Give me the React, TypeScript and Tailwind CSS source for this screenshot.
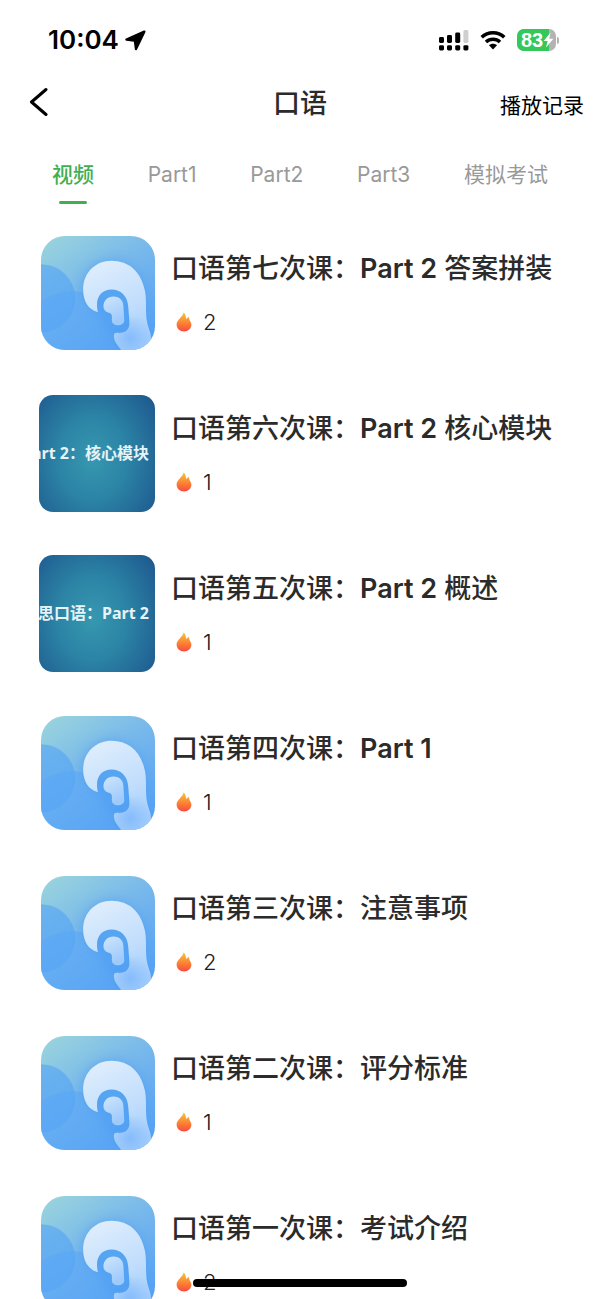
import { useState } from 'react';

type Cover = 'ear' | 'text';

type Lesson = {
    title: string;
    views: number;
    cover: Cover;
    coverText?: string;
};

const TABS = ['视频', 'Part1', 'Part2', 'Part3', '模拟考试'];

const LESSONS: Lesson[] = [
    { title: '口语第七次课：Part 2 答案拼装', views: 2, cover: 'ear' },
    { title: '口语第六次课：Part 2 核心模块', views: 1, cover: 'text', coverText: 'art 2：核心模块' },
    { title: '口语第五次课：Part 2 概述', views: 1, cover: 'text', coverText: '思口语：Part 2' },
    { title: '口语第四次课：Part 1', views: 1, cover: 'ear' },
    { title: '口语第三次课：注意事项', views: 2, cover: 'ear' },
    { title: '口语第二次课：评分标准', views: 1, cover: 'ear' },
    { title: '口语第一次课：考试介绍', views: 2, cover: 'ear' },
];

function SignalIcon() {
    return (
        <svg width="30" height="21" viewBox="0 0 30 21" aria-hidden="true">
            <rect x="0" y="7" width="5" height="6" rx="1.4" />
            <rect x="8" y="5" width="5" height="8" rx="1.4" />
            <rect x="16.2" y="2.5" width="5" height="10.5" rx="1.4" />
            <rect x="24.4" y="0" width="5" height="13" rx="1.4" fill="#cfcfcf" />
            <rect x="0" y="15.2" width="5" height="5.3" rx="1.4" />
            <rect x="8" y="15.2" width="5" height="5.3" rx="1.4" />
            <rect x="16.2" y="15.2" width="5" height="5.3" rx="1.4" />
            <rect x="24.4" y="15.2" width="5" height="5.3" rx="1.4" />
        </svg>
    );
}

function WifiIcon() {
    return (
        <svg width="26" height="20" viewBox="0 0 26 20" aria-hidden="true">
            <path d="M1.700 7.200C8 1.200 18 1.200 24.300 7.200" fill="none" stroke="#000" strokeWidth="3.6" />
            <path d="M6 12c4-3.800 10-3.800 14 0" fill="none" stroke="#000" strokeWidth="3.5" />
            <path d="M13 19.400l-4-4.100c2.200-2 5.800-2 8 0z" />
        </svg>
    );
}

function BatteryIcon() {
    return (
        <div className="flex items-center gap-px">
            <div className="relative flex h-[22px] w-[39px] items-center overflow-hidden rounded-[7px] bg-[#b3b3b3]">
                <div className="absolute inset-y-0 left-0 w-8 bg-[#34c759]"></div>
                <span className="relative pl-1 font-['Liberation_Sans',sans-serif] text-[20px] leading-none font-bold text-white">
                    83
                </span>
                <svg className="relative" width="11" height="16" viewBox="0 0 11 16" aria-hidden="true">
                    <path d="M7.600.600L.600 9h4L3 15.400 10.400 6.700H6.200z" fill="#fff" />
                </svg>
            </div>
            <div className="h-[7px] w-[2px] rounded-r-full bg-[#b3b3b3]"></div>
        </div>
    );
}

function StatusBar() {
    return (
        <div className="flex h-20 items-center justify-between pr-[41px] pl-12">
            <div className="flex items-center gap-1.5">
                <span className="text-[26px] leading-none font-semibold text-black">10:04</span>
                <svg width="21" height="21" viewBox="0 0 21 21" aria-hidden="true">
                    <path
                        d="M19.300 1.700L1.500 9.600l7.600.9c.6.100.8.300.9.9l1 7.600z"
                        stroke="#000"
                        strokeWidth="2.4"
                        strokeLinejoin="round"
                    />
                </svg>
            </div>
            <div className="flex items-center gap-[11px]">
                <SignalIcon />
                <WifiIcon />
                <BatteryIcon />
            </div>
        </div>
    );
}

function EarCover() {
    return (
        <svg className="h-[114px] w-[114px] rounded-[24px]" viewBox="0 0 115 115" aria-hidden="true">
            <defs>
                <linearGradient id="earBg" x1="0" y1="0" x2="0.7" y2="1">
                    <stop offset="0" stopColor="#9dd6dc" />
                    <stop offset="0.45" stopColor="#7bbbea" />
                    <stop offset="1" stopColor="#58a3f6" />
                </linearGradient>
                <linearGradient id="earFill" x1="0.2" y1="0" x2="0.6" y2="1">
                    <stop offset="0" stopColor="#dfeefd" />
                    <stop offset="0.6" stopColor="#c2defc" />
                    <stop offset="1" stopColor="#a6cffc" />
                </linearGradient>
                <radialGradient id="earLobe" gradientUnits="userSpaceOnUse" cx="90" cy="103" r="24">
                    <stop offset="0" stopColor="#82bafa" stopOpacity="0.9" />
                    <stop offset="1" stopColor="#82bafa" stopOpacity="0" />
                </radialGradient>
                <linearGradient id="earInner" x1="0" y1="0" x2="0.4" y2="1">
                    <stop offset="0" stopColor="#cfe5fc" />
                    <stop offset="1" stopColor="#9ccafb" />
                </linearGradient>
                <filter id="earGlow" x="-40%" y="-40%" width="180%" height="180%">
                    <feGaussianBlur stdDeviation="6" />
                </filter>
                <path
                    id="earShape"
                    d="M57.500 77C48 74.500 42.500 66 42.500 54 42.500 37 55 25 71 25c18 0 30 11 34 31 1.500 8 .5 18 1.500 28 1.300 9 4.500 13 4.500 20 0 4-2 8-5 11H81c-4-5-7.500-9-7.500-14 0-2.500 1-3.500 3.500-3.300 8 .8 12.500-3 12.300-10.200L88 71c-.8-10.500-7.500-17-17-17-9 0-14.500 6.500-14.500 15 0 3 .3 5.500 1 8z"
                />
            </defs>
            <rect width="115" height="115" fill="url(#earBg)" />
            <circle cx="0" cy="63" r="34.5" fill="#54a4f5" opacity="0.6" />
            <circle cx="33" cy="114" r="58" fill="#58a6f8" opacity="0.5" />
            <path
                d="M42 54C42 36 55 25 71 25c18 0 31 13 34 32 1 17 2 34 8 58H78L58 78C48 74 42 66 42 54z"
                fill="#4f9ff3"
                opacity="0.75"
                filter="url(#earGlow)"
            />
            <use href="#earShape" fill="url(#earFill)" />
            <use href="#earShape" fill="url(#earLobe)" />
            <path
                d="M73 61c6.500 0 10 4 10.200 10L84 85c0 3.500-3 5-6.500 5s-6-1.500-6-5v-4c0-2-1-3-3-3.600C65 76.500 63 74 63 71c0-6 4.500-10 10-10z"
                fill="url(#earInner)"
            />
        </svg>
    );
}

function TextCover({ text }: { text: string }) {
    return (
        <div className="flex h-[117px] w-full items-center justify-end overflow-hidden rounded-[14px] bg-[radial-gradient(ellipse_80%_95%_at_46%_54%,#3798b0_0%,#2b83a5_38%,#205f92_78%,#194779_100%)] pr-1.5">
            <span className="shrink-0 font-['Noto_Sans','Noto_Sans_CJK_SC',sans-serif] text-[16px] font-bold whitespace-nowrap text-[#e6f3f7]">
                {text}
            </span>
        </div>
    );
}

function FlameIcon() {
    return (
        <svg width="16" height="20" viewBox="0 0 16 20" aria-hidden="true">
            <defs>
                <linearGradient id="flame" x1="0" y1="0" x2="0" y2="1">
                    <stop offset="0" stopColor="#f3c63c" />
                    <stop offset="0.45" stopColor="#fa9136" />
                    <stop offset="1" stopColor="#fb4a3c" />
                </linearGradient>
            </defs>
            <path
                d="M7.600.5c1.700 1.600 2.500 3.700 2.400 6.500 1-.4 1.600-1.200 1.800-2.200 1.200.7 1.500 1.700 1.700 3 .2 1.500 1.900 2.400 1.900 4.700 0 4-3.200 6.900-7.400 6.900S.6 16.500.6 12.500c0-2.700 1.400-4.200 3.300-6.300C5.700 4.300 7 2.700 7.600.5z"
                fill="url(#flame)"
            />
        </svg>
    );
}

// Latin parts are set one step heavier than the Chinese text
function LessonTitle({ title }: { title: string }) {
    return (
        <h2 className="truncate text-[27px] leading-10 font-medium text-[#2b2b2b]">
            {title.split(/(Part \d)/).map((part, i) =>
                part.startsWith('Part') ? (
                    <span key={i} className="font-semibold">{part}</span>
                ) : (
                    part
                )
            )}
        </h2>
    );
}

function LessonRow({ lesson }: { lesson: Lesson }) {
    return (
        <li className="h-40">
            <a href="#" className="flex h-full items-center gap-4 pr-4 pl-[39px]">
                <div className="flex w-[116px] shrink-0 justify-end">
                    {lesson.cover === 'ear' ? <EarCover /> : <TextCover text={lesson.coverText ?? ''} />}
                </div>
                <div className="flex h-[117px] min-w-0 flex-col justify-between py-3.5">
                    <LessonTitle title={lesson.title} />
                    <div className="flex items-center gap-[11px] pl-[5px]">
                        <FlameIcon />
                        <span className="text-[22px] leading-8 font-light text-[#222]">{lesson.views}</span>
                    </div>
                </div>
            </a>
        </li>
    );
}

export default function App() {
    const [active, setActive] = useState(TABS[0]);

    return (
        <div className="flex h-screen flex-col overflow-hidden bg-white font-['Inter','Noto_Sans_CJK_SC',sans-serif]">
            <StatusBar />

            <header className="grid h-11 grid-cols-[1fr_auto_1fr] items-center px-4">
                <button type="button" aria-label="返回" className="justify-self-start pl-3">
                    <svg width="20" height="30" viewBox="0 0 20 30" aria-hidden="true">
                        <path
                            d="M18 2.500L3.500 15 18 27.500"
                            fill="none"
                            stroke="#000"
                            strokeWidth="3"
                            strokeLinecap="round"
                            strokeLinejoin="round"
                        />
                    </svg>
                </button>
                <h1 className="pt-0.5 text-[27px] leading-none font-medium text-[#2b2b2b]">口语</h1>
                <button type="button" className="justify-self-end pt-1.5 text-[21px] leading-none text-black">
                    播放记录
                </button>
            </header>

            <nav className="flex h-[89px] shrink-0 items-start justify-between px-[52px] pt-[35px]">
                {TABS.map(tab => (
                    <button
                        key={tab}
                        type="button"
                        onClick={() => setActive(tab)}
                        className={`flex flex-col items-center gap-2.5 text-[21px] leading-8 ${
                            tab === active ? 'font-medium text-[#42ae52]' : 'font-normal text-[#999]'
                        }`}
                    >
                        {tab}
                        {tab === active && <span className="h-[3px] w-7 rounded-full bg-[#42ae52]"></span>}
                    </button>
                ))}
            </nav>

            <ul className="min-h-0 flex-1 overflow-hidden">
                {LESSONS.map(lesson => (
                    <LessonRow key={lesson.title} lesson={lesson} />
                ))}
            </ul>

            {/* Home indicator floats over the list */}
            <div className="fixed bottom-3 left-1/2 h-2 w-[214px] -translate-x-1/2 rounded-full bg-black"></div>
        </div>
    );
}
